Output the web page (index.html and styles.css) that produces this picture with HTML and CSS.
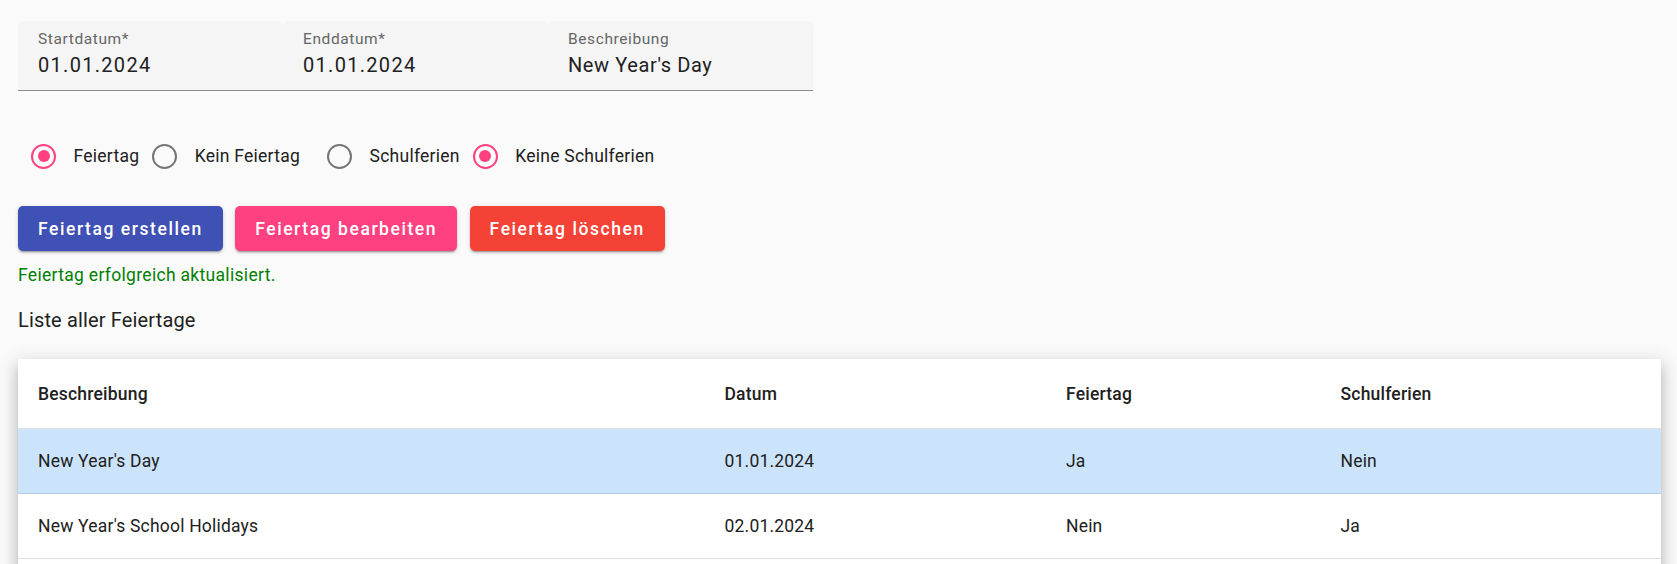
FILE: index.html
```html
<!DOCTYPE html>
<html lang="de">
<head>
<meta charset="utf-8">
<title>Feiertage</title>
<link rel="stylesheet" href="styles.css">
</head>
<body>
<div class="page">
  <div class="fields">
    <div class="field">
      <span class="label">Startdatum*</span>
      <span class="value date">01.01.2024</span>
    </div>
    <div class="field">
      <span class="label">Enddatum*</span>
      <span class="value date">01.01.2024</span>
    </div>
    <div class="field">
      <span class="label">Beschreibung</span>
      <span class="value">New Year's Day</span>
    </div>
  </div>

  <div class="radios">
    <div class="radio-group">
      <label class="radio checked"><span class="radio-ctl"><span class="circle"></span></span><span class="radio-label">Feiertag</span></label>
      <label class="radio"><span class="radio-ctl"><span class="circle"></span></span><span class="radio-label">Kein Feiertag</span></label>
    </div>
    <div class="radio-group second">
      <label class="radio"><span class="radio-ctl"><span class="circle"></span></span><span class="radio-label">Schulferien</span></label>
      <label class="radio checked"><span class="radio-ctl"><span class="circle"></span></span><span class="radio-label">Keine Schulferien</span></label>
    </div>
  </div>

  <div class="buttons">
    <button class="btn btn-primary">Feiertag erstellen</button>
    <button class="btn btn-accent">Feiertag bearbeiten</button>
    <button class="btn btn-warn">Feiertag löschen</button>
  </div>

  <p class="msg">Feiertag erfolgreich aktualisiert.</p>
  <h3 class="title">Liste aller Feiertage</h3>

  <div class="table-card">
    <table class="table">
      <colgroup>
        <col class="c1"><col class="c2"><col class="c3"><col class="c4">
      </colgroup>
      <thead>
        <tr><th>Beschreibung</th><th>Datum</th><th>Feiertag</th><th>Schulferien</th></tr>
      </thead>
      <tbody>
        <tr class="selected"><td>New Year's Day</td><td>01.01.2024</td><td>Ja</td><td>Nein</td></tr>
        <tr><td>New Year's School Holidays</td><td>02.01.2024</td><td>Nein</td><td>Ja</td></tr>
      </tbody>
    </table>
  </div>
</div>
</body>
</html>
```

FILE: styles.css
```css
html, body {
  margin: 0;
  padding: 0;
  background: #fafafa;
  font-family: Roboto, "Noto Sans", Arial, sans-serif;
  color: #212121;
}

.page {
  padding: 21px 16px 0 18px;
}

.fields {
  display: flex;
}

.field {
  width: 265px;
  height: 70px;
  box-sizing: border-box;
  background: #f5f5f5;
  border-radius: 5px 5px 0 0;
  border-bottom: 1px solid #8c8c8c;
  padding: 0 20px;
  display: flex;
  flex-direction: column;
}

.label {
  display: block;
  padding-top: 10px;
  font-size: 15.5px;
  line-height: 17px;
  color: #666666;
  letter-spacing: 0.6px;
}

.value {
  display: block;
  margin-top: 5px;
  font-size: 20px;
  line-height: 24px;
  color: #212121;
  letter-spacing: 0.6px;
}

.value.date {
  letter-spacing: 1.3px;
}

.radios {
  display: flex;
  margin-top: 40px;
  height: 50px;
}

.radio-group {
  display: flex;
}

.radio-group.second {
  margin-left: 14px;
}

.radio {
  display: flex;
  align-items: center;
  height: 50px;
  font-size: 17.5px;
  letter-spacing: 0.25px;
  color: #212121;
}

.radio-ctl {
  width: 50px;
  height: 50px;
  display: flex;
  align-items: center;
  justify-content: center;
  margin-left: 0.5px;
}

.circle {
  width: 25px;
  height: 25px;
  box-sizing: border-box;
  border: 2.5px solid #757575;
  border-radius: 50%;
  display: flex;
  align-items: center;
  justify-content: center;
}

.radio.checked .circle {
  border-color: #ff4081;
}

.radio.checked .circle::after {
  content: "";
  width: 12px;
  height: 12px;
  border-radius: 50%;
  background: #ff4081;
}

.radio-label {
  padding-left: 5px;
}

.buttons {
  display: flex;
  gap: 12.5px;
  margin-top: 25px;
}

.btn {
  height: 45px;
  padding: 0 20px;
  border: none;
  border-radius: 5px;
  font-family: Roboto, "Noto Sans", Arial, sans-serif;
  font-size: 17.5px;
  font-weight: 500;
  letter-spacing: 1.56px;
  color: #ffffff;
  box-shadow: 0 3px 1px -2px rgba(0,0,0,.2), 0 2px 2px 0 rgba(0,0,0,.14), 0 1px 5px 0 rgba(0,0,0,.12);
}

.btn-primary { background: #3f51b5; }
.btn-accent { background: #ff4081; }
.btn-warn { background: #f44336; }

.msg {
  margin: 12px 0 0;
  font-size: 17.5px;
  line-height: 25px;
  letter-spacing: 0.31px;
  color: #008000;
}

.title {
  margin: 18px 0 0;
  font-size: 20px;
  line-height: 28px;
  font-weight: 400;
  letter-spacing: 0.15px;
  color: #212121;
}

.table-card {
  margin-top: 25px;
  width: 1643px;
  padding-bottom: 40px;
  background: #ffffff;
  box-shadow: 0 6px 6px -4px rgba(0,0,0,.2), 0 10px 12px 1px rgba(0,0,0,.14), 0 4px 18px 3px rgba(0,0,0,.12);
}

.table {
  width: 100%;
  table-layout: fixed;
  border-collapse: collapse;
  font-size: 17.5px;
  letter-spacing: 0.2px;
}

.c1 { width: 686.5px; }
.c2 { width: 341.5px; }
.c3 { width: 274.5px; }
.c4 { width: 340.5px; }

.table th,
.table td {
  padding: 0 20px;
  text-align: left;
  border-bottom: 1px solid #e0e0e0;
  color: #212121;
}

.table th {
  height: 69px;
  font-weight: 500;
}

.table td {
  height: 64px;
  font-weight: 400;
}

.table tr.selected td {
  background: #cce4fb;
  border-bottom-color: #b6cde4;
}
```
